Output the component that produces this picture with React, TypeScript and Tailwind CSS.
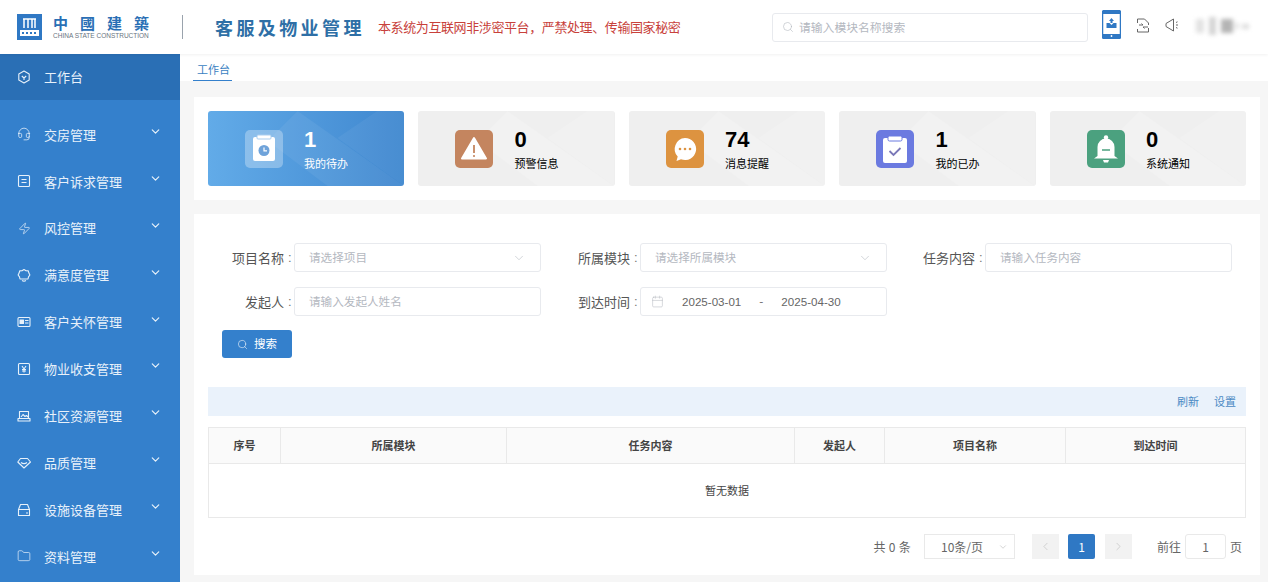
import React from "react";
import { ChevronDown, ChevronLeft, ChevronRight, Search, Calendar, Headset, Zap, Folder } from "lucide-react";

const font = { fontFamily: '"Noto Sans CJK SC","Liberation Sans",sans-serif' };
const latin = { fontFamily: '"Liberation Sans",sans-serif' };

function Ico({ children, w = 14, h = 14 }: { children: React.ReactNode; w?: number; h?: number }) {
  return (
    <svg width={w} height={h} viewBox="0 0 14 14" fill="none" stroke="currentColor" strokeWidth="1.1" strokeLinejoin="round">
      {children}
    </svg>
  );
}

const menu: [string, React.ReactNode][] = [
  ["交房管理", <Headset size={14} strokeWidth={1.3} />],
  ["客户诉求管理", <Ico><rect x="1.5" y="1.5" width="11" height="11" rx="1" /><path d="M4.5 5.5h5M4.5 8.5h5" /></Ico>],
  ["风控管理", <Zap size={13} strokeWidth={1.3} />],
  ["满意度管理", <Ico><path d="M7 1.5l2 1.2 2.3.2.6 2.2 1 1.9-1.4 1.8-.5 2.2H3l-.5-2.2L1.1 7l1-1.9.6-2.2L5 2.7z" /><path d="M5 12.5c1.2.7 2.8.7 4 0" /></Ico>],
  ["客户关怀管理", <Ico><rect x="1" y="2.5" width="12" height="9" rx="1" /><path d="M3 5h3.5v3.5H3z" fill="currentColor" /><path d="M8 5.5h3.5M8 8h3.5" /></Ico>],
  ["物业收支管理", <Ico><rect x="1.5" y="1.5" width="11" height="11" rx="1" /><path d="M5 4l2 3 2-3M7 7v3.5M5 7.5h4M5 9h4" /></Ico>],
  ["社区资源管理", <Ico><path d="M2.5 9V2.5h9V9M1 9.5h12v2.5H1zM4 8l2-2.5L8 7.5l1.5-1L11 8" /></Ico>],
  ["品质管理", <Ico><path d="M3.5 2.5h7l3 3.5L7 12 .8 6z" /><path d="M4 6.5c2 1.5 4 1.5 6 0" /></Ico>],
  ["设施设备管理", <Ico><path d="M1.5 6.5L3.5 1.5h7l2 5v6h-11zM1.5 6.5h11M9 10h2" /></Ico>],
  ["资料管理", <Folder size={14} strokeWidth={1.2} />],
];

function Facets({ active }: { active?: boolean }) {
  return (
    <svg className="absolute inset-0 h-full w-full" viewBox="0 0 197 75" preserveAspectRatio="none">
      <path d="M90 0L197 75H120L60 30z" fill="#ffffff" opacity={active ? 0.06 : 0.18} />
      <path d="M197 0V75L130 27L170 0z" fill="#ffffff" opacity={active ? 0.05 : 0.14} />
    </svg>
  );
}

function StatIcon({ kind }: { kind: number }) {
  if (kind === 0)
    return (
      <svg width="38" height="38" viewBox="0 0 38 38">
        <rect x="8" y="7" width="22" height="24" rx="2" fill="#fff" />
        <rect x="12" y="5" width="14" height="4" rx="1" fill="#fff" stroke="#a9cdef" strokeWidth="1" />
        <circle cx="19" cy="20.5" r="5.5" fill="#6fa3da" />
        <path d="M19 17.5v3.3h3" stroke="#fff" strokeWidth="1.2" fill="none" />
      </svg>
    );
  if (kind === 1)
    return (
      <svg width="38" height="38" viewBox="0 0 38 38">
        <path d="M19 8L31 28.5H7z" fill="#fff" stroke="#fff" strokeWidth="2" strokeLinejoin="round" />
        <path d="M19 15v8" stroke="#c4855f" strokeWidth="1.8" />
        <circle cx="19" cy="26" r="1.1" fill="#c4855f" />
      </svg>
    );
  if (kind === 2)
    return (
      <svg width="38" height="38" viewBox="0 0 38 38">
        <path d="M19 8a11 11 0 1 1-4 21.2L10.5 31l1.2-4.5A11 11 0 0 1 19 8z" fill="#fff" />
        <circle cx="14" cy="19" r="1.3" fill="#dd9340" />
        <circle cx="19" cy="19" r="1.3" fill="#dd9340" />
        <circle cx="24" cy="19" r="1.3" fill="#dd9340" />
      </svg>
    );
  if (kind === 3)
    return (
      <svg width="38" height="38" viewBox="0 0 38 38">
        <rect x="7" y="8" width="24" height="25" rx="2" fill="#fff" />
        <rect x="12" y="6" width="14" height="5" rx="1.5" fill="#fff" stroke="#6b7ae0" strokeWidth="1" />
        <path d="M13.5 21l4 4 7-7" stroke="#7b78b8" strokeWidth="1.8" fill="none" />
      </svg>
    );
  return (
    <svg width="38" height="38" viewBox="0 0 38 38">
      <circle cx="19" cy="7.5" r="2.2" fill="#fff" />
      <path d="M10.5 26V17a8.5 8.5 0 0 1 17 0v9l3.5 2.5H7z" fill="#fff" />
      <path d="M15 20h8" stroke="#4ba17f" strokeWidth="1.6" />
      <path d="M16 30h6l-1 2.5h-4z" fill="#fff" />
    </svg>
  );
}

const stats = [
  { n: "1", l: "我的待办", bg: "bg-white/30" },
  { n: "0", l: "预警信息", bg: "bg-[#c4855f]" },
  { n: "74", l: "消息提醒", bg: "bg-[#dd9340]" },
  { n: "1", l: "我的已办", bg: "bg-[#6b7ae0]" },
  { n: "0", l: "系统通知", bg: "bg-[#4ba17f]" },
];

function Field({ label, labelW, children }: { label: string; labelW: string; children: React.ReactNode }) {
  return (
    <div className="flex items-center">
      <div className={`${labelW} flex shrink-0 justify-end text-[13px] text-[#555]`}>
        {label}
        <span style={latin} className="mr-[4px] ml-[4px] w-[2px] text-[#777]">:</span>
      </div>
      <div className="flex h-[29px] w-[247px] items-center rounded-[3px] border border-[#e8eaee] bg-white px-[14px] text-[11.6px] text-[#b4b8bf]">{children}</div>
    </div>
  );
}

export default function App() {
  return (
    <div style={font} className="flex h-[582px] w-[1268px] flex-col overflow-hidden bg-[#f6f6f6]">
      <header className="relative z-10 flex h-[54px] shrink-0 items-center bg-white pl-[17px] shadow-[0_1px_3px_rgba(0,0,0,0.06)]">
        <svg width="25" height="26" viewBox="0 0 25 26" className="shrink-0">
          <rect width="25" height="26" fill="#2f78c4" />
          <path d="M6 5h13M7 5v9M11 5v9M15 5v9M18 5v9" stroke="#fff" strokeWidth="1.5" fill="none" />
          <path d="M3 16h19v6H3z" fill="#fff" />
          <path d="M5 18h2v2H5zM9 18h2v2H9zM13 18h2v2h-2zM17 18h2v2h-2z" fill="#2f78c4" />
        </svg>
        <div className="ml-[11px] flex w-[97px] flex-col">
          <div style={{ fontFamily: '"Noto Sans CJK TC",sans-serif' }} className="text-[15px] leading-[17px] font-bold tracking-[12px] whitespace-nowrap text-[#2a6fb5]">中國建築</div>
          <div style={latin} className="mt-[1px] text-[6.5px] leading-[8px] whitespace-nowrap text-[#6a7480]">CHINA STATE CONSTRUCTION</div>
        </div>
        <div className="ml-[32px] h-[24px] w-px bg-[#9aa3ad]" />
        <div className="ml-[32px] w-[150px] text-[18px] font-bold tracking-[3.4px] whitespace-nowrap text-[#2e6fa6]">客服及物业管理</div>
        <div className="ml-[13px] w-[302px] text-[13px] tracking-[-0.4px] whitespace-nowrap text-[#c8413b]">本系统为互联网非涉密平台，严禁处理、传输国家秘密</div>
        <div className="ml-[92px] flex h-[29px] w-[316px] items-center rounded-[3px] border border-[#e8eaee] pl-[9px] text-[11.8px] text-[#b4b8bf]">
          <Search size={12} strokeWidth={1.2} className="mr-[5px]" />
          请输入模块名称搜索
        </div>
        <svg width="19" height="29" viewBox="0 0 19 29" className="mb-[5px] ml-[14px]">
          <rect x="0.5" y="0.5" width="18" height="28" rx="2" fill="#fff" stroke="#2f78c4" strokeWidth="1.5" />
          <path d="M1 1h17v3H1zM1 24h17v4H1z" fill="#2f78c4" />
          <path d="M4.5 13h3l2 2 2-2h3v5h-10zM9.5 8l2.5 3h-1.5v2h-2v-2H7z" fill="#2f78c4" />
          <circle cx="9.5" cy="26" r="0.9" fill="#fff" />
        </svg>
        <svg width="14" height="15" viewBox="0 0 14 15" fill="none" stroke="#666" strokeWidth="1" className="mb-[4px] ml-[15px]">
          <path d="M1.5 5V1h7l4 4v2M12.5 10v4h-11v-3M3 7h4l-1.5-1.5M12 9H7l1.5 1.5" />
        </svg>
        <svg width="15" height="14" viewBox="0 0 15 14" fill="none" stroke="#666" strokeWidth="1" className="mb-[4px] ml-[15px]">
          <path d="M1 5.5L8.5 1v12L1 8.5zM11 4.5l1.5-.7M11 7h2M11 9.5l1.5.7" />
        </svg>
        <div className="mb-[2px] ml-[16px] flex items-center blur-[2px]">
          <div className="h-[14px] w-[8px] bg-[#e2e2e2]" />
          <div className="ml-[5px] h-[18px] w-[7px] bg-[#d4d4d4]" />
          <div className="ml-[5px] h-[14px] w-[12px] bg-[#b4b4b4]" />
          <div className="ml-[2px] h-[6px] w-[4px] bg-[#e4e4e4]" />
          <div className="ml-[3px] h-[5px] w-[7px] bg-[#dcdcdc]" />
        </div>
      </header>
      <div className="flex min-h-0 flex-1">
        <aside className="w-[180px] shrink-0 overflow-hidden bg-[#3480cc] text-[13px] text-[#e8f1fa]">
          <div className="flex h-[46px] items-center bg-[#2a6fb5] pl-[17px]">
            <Ico>
              <path d="M7 1l5.2 3v6L7 13l-5.2-3V4z" />
              <path d="M4.8 6L7 8l2.2-2M7 8v2" />
            </Ico>
            <span className="ml-[13px]">工作台</span>
          </div>
          <div className="pt-[11px]">
            {menu.map(([t, ic]) => (
              <div key={t} className="flex h-[46.9px] items-center pl-[17px]">
                <span className="flex w-[14px] justify-center">{ic}</span>
                <span className="ml-[13px] flex-1">{t}</span>
                <ChevronDown size={13} strokeWidth={2.2} className="mr-[18px] mb-[6px]" />
              </div>
            ))}
          </div>
        </aside>
        <main className="min-w-0 flex-1">
          <div className="flex h-[27px] bg-white pl-[13px]">
            <div className="h-[27px] border-b border-[#3480cc] pr-[2px] pl-[4px] text-[11px] leading-[30px] text-[#3a7fc2]">工作台</div>
          </div>
          <div className="px-[14px] pt-[16px] pr-[8px]">
            <section className="flex h-[103px] items-center gap-[14.4px] bg-white px-[14px]">
              {stats.map((s, i) => (
                <div key={i} className={`relative flex h-[75px] w-[197px] items-center overflow-hidden rounded-[3px] pl-[37px] ${i === 0 ? "bg-[linear-gradient(90deg,#62abe8,#3f87cf)] text-white" : "bg-[#efefef] text-black"}`}>
                  <Facets active={i === 0} />
                  <div className={`relative h-[38px] w-[38px] rounded-[5px] ${s.bg}`}>
                    <StatIcon kind={i} />
                  </div>
                  <div className="relative ml-[21px]">
                    <div style={latin} className="text-[22px] leading-[24px] font-bold">{s.n}</div>
                    <div className="mt-[4px] text-[11px] leading-[14px]">{s.l}</div>
                  </div>
                </div>
              ))}
            </section>
            <section className="mt-[14px] h-[361px] bg-white px-[14px] pt-[29px]">
              <div className="flex">
                <Field label="项目名称" labelW="w-[86px]">
                  <span className="flex-1">请选择项目</span>
                  <ChevronDown size={14} strokeWidth={1} />
                </Field>
                <Field label="所属模块" labelW="w-[99px]">
                  <span className="flex-1">请选择所属模块</span>
                  <ChevronDown size={14} strokeWidth={1} />
                </Field>
                <Field label="任务内容" labelW="w-[98px]">请输入任务内容</Field>
              </div>
              <div className="mt-[15px] flex">
                <Field label="发起人" labelW="w-[86px]">请输入发起人姓名</Field>
                <Field label="到达时间" labelW="w-[99px]">
                  <Calendar size={13} strokeWidth={1} className="mr-[18px] -ml-[4px]" />
                  <span style={latin} className="text-[11.6px] text-[#666]">2025-03-01</span>
                  <span className="mx-[18px] text-[#666]">-</span>
                  <span style={latin} className="text-[11.6px] text-[#666]">2025-04-30</span>
                </Field>
              </div>
              <button className="mt-[14px] ml-[14px] flex h-[28px] w-[70px] items-center justify-center gap-[6px] rounded-[3px] bg-[#3480cc] text-[11.5px] text-white">
                <Search size={11} strokeWidth={1.2} />
                搜索
              </button>
              <div className="mt-[29px] flex h-[29px] items-center justify-end gap-[15px] bg-[#eaf2fb] pr-[10px] text-[11px] text-[#4c8ac4]">
                <span>刷新</span>
                <span>设置</span>
              </div>
              <div className="mt-[11px] h-[91px] border border-[#e9e9e9] text-[#444]">
                <div className="grid h-[36px] grid-cols-[72px_226px_288px_90px_181px_1fr] border-b border-[#e9e9e9] bg-[#fafafa] text-[11px] font-bold">
                  {["序号", "所属模块", "任务内容", "发起人", "项目名称", "到达时间"].map((h, i) => (
                    <div key={h} className={`flex items-center justify-center ${i < 5 ? "border-r border-[#e9e9e9]" : ""}`}>{h}</div>
                  ))}
                </div>
                <div className="flex h-[53px] items-center justify-center text-[11px]">暂无数据</div>
              </div>
              <div className="mt-[16px] flex h-[25px] items-center justify-end pr-[4px] text-[12px] text-[#666]">
                <span className="tracking-[0.3px]">共 0 条</span>
                <div className="ml-[13px] flex h-[25px] w-[91px] items-center border border-[#e9e9e9] pl-[16px] text-[#666]">
                  <span className="flex-1">10条/页</span>
                  <ChevronDown size={10} strokeWidth={1} className="mr-[6px] text-[#999]" />
                </div>
                <div className="ml-[17px] flex h-[25px] w-[27px] items-center justify-center bg-[#f2f2f2] text-[#b5b5b5]"><ChevronLeft size={13} strokeWidth={1} /></div>
                <div className="ml-[9px] flex h-[25px] w-[27px] items-center justify-center rounded-[2px] bg-[#2f78c4] text-white">1</div>
                <div className="ml-[10px] flex h-[25px] w-[27px] items-center justify-center bg-[#f2f2f2] text-[#b5b5b5]"><ChevronRight size={13} strokeWidth={1} /></div>
                <span className="ml-[25px]">前往</span>
                <div className="ml-[4px] flex h-[25px] w-[41px] items-center justify-center rounded-[3px] border border-[#e9e9e9]">1</div>
                <span className="ml-[4px]">页</span>
              </div>
            </section>
          </div>
        </main>
      </div>
    </div>
  );
}
